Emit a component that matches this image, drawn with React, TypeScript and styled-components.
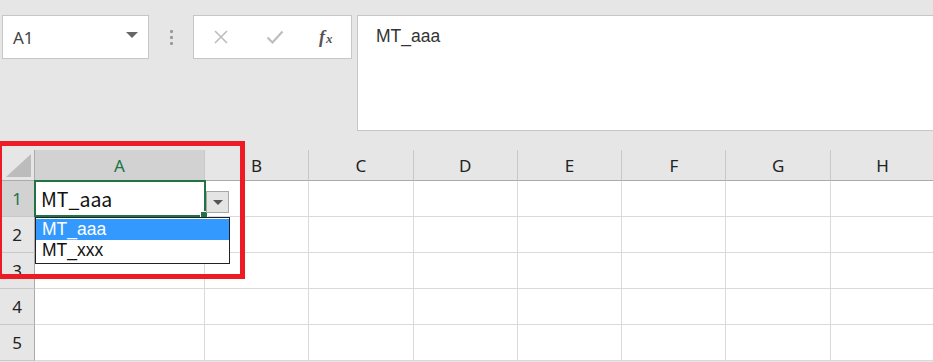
import styled, { createGlobalStyle } from "styled-components";

const GlobalStyle = createGlobalStyle`
  html, body {
    margin: 0;
    padding: 0;
    background: #e6e6e6;
  }
  body {
    font-family: "Noto Sans", "Liberation Sans", sans-serif;
  }
`;

const COLS = ["A", "B", "C", "D", "E", "F", "G", "H"];
const ROWS = [1, 2, 3, 4, 5];

const Page = styled.div`
  position: relative;
  width: 933px;
  height: 362px;
  overflow: hidden;
  background: #e6e6e6;
`;

const FormulaBar = styled.div`
  display: flex;
  align-items: flex-start;
  padding: 15px 0 0 2px;
  height: 128px;
  box-sizing: border-box;
`;

const NameBox = styled.div`
  width: 147px;
  height: 44px;
  box-sizing: border-box;
  background: #fff;
  border: 1px solid #c6c6c6;
  display: flex;
  align-items: center;
  justify-content: space-between;
  padding: 0 10px 0 10px;
  font-size: 17px;
  color: #444;
`;

const Caret = styled.span`
  width: 0;
  height: 0;
  border-left: 6px solid transparent;
  border-right: 6px solid transparent;
  border-top: 6px solid #666;
  margin-top: -4px;
`;

const Grip = styled.div`
  width: 44px;
  height: 44px;
  display: flex;
  flex-direction: column;
  align-items: center;
  justify-content: center;
  gap: 3px;
`;

const GripDot = styled.span`
  width: 3px;
  height: 3px;
  background: #9a9a9a;
  border-radius: 1px;
`;

const FxBox = styled.div`
  width: 159px;
  height: 44px;
  box-sizing: border-box;
  background: #fff;
  border: 1px solid #c6c6c6;
  display: flex;
  align-items: center;
  padding-left: 19px;
  gap: 37px;
`;

const FxLabel = styled.span`
  font-family: "Liberation Serif", serif;
  font-style: italic;
  font-weight: bold;
  font-size: 18px;
  color: #555;
  margin-left: -2px;

  small {
    font-size: 13px;
    margin-left: 1px;
  }
`;

const FormulaInput = styled.div`
  flex: 1;
  margin-left: 5px;
  margin-right: -4px;
  height: 116px;
  box-sizing: border-box;
  background: #fff;
  border: 1px solid #c6c6c6;
  padding: 10px 0 0 18px;
  font-family: "Liberation Sans", Arial, sans-serif;
  font-size: 17.5px;
  color: #333;
`;

const SheetArea = styled.div`
  position: relative;
  margin-top: 22px;
`;

const Grid = styled.div`
  display: grid;
  grid-template-columns: 35px 170px repeat(7, 104.3px);
  grid-template-rows: 31px repeat(5, 36px);
`;

const Corner = styled.div`
  background: #e6e6e6;
  border-right: 1px solid #ababab;
  border-bottom: 1px solid #ababab;
  box-sizing: border-box;
  display: flex;
  align-items: flex-end;
  justify-content: flex-end;
  padding: 0 3px 3px 0;
`;

const ColHeader = styled.div<{ $active?: boolean }>`
  background: ${(p) => (p.$active ? "#d2d2d2" : "#e6e6e6")};
  color: ${(p) => (p.$active ? "#217346" : "#222")};
  border-right: 1px solid #c8c8c8;
  border-bottom: 1px solid #ababab;
  box-sizing: border-box;
  display: flex;
  align-items: center;
  justify-content: center;
  font-size: 17px;
`;

const RowHeader = styled.div<{ $active?: boolean }>`
  background: ${(p) => (p.$active ? "#d2d2d2" : "#e6e6e6")};
  color: ${(p) => (p.$active ? "#217346" : "#222")};
  border-right: 1px solid #ababab;
  border-bottom: 1px solid #c8c8c8;
  box-sizing: border-box;
  display: flex;
  align-items: center;
  justify-content: center;
  font-size: 17px;
`;

const Cell = styled.div`
  background: #fff;
  border-right: 1px solid #dadada;
  border-bottom: 1px solid #dadada;
  box-sizing: border-box;
`;

const ActiveCell = styled.div`
  position: absolute;
  left: 34px;
  top: 30px;
  width: 172px;
  height: 37px;
  box-sizing: border-box;
  border: 2px solid #217346;
  background: #fff;
  padding: 0 0 0 5px;
  display: flex;
  align-items: center;
  font-family: "Noto Sans CJK JP", "Noto Sans", sans-serif;
  font-size: 19.5px;
  color: #111;
`;

const FillHandle = styled.span`
  position: absolute;
  right: -4px;
  bottom: -4px;
  width: 6px;
  height: 6px;
  background: #217346;
  border: 1px solid #fff;
`;

const DropButton = styled.div`
  position: absolute;
  left: 206px;
  top: 41px;
  width: 23px;
  height: 22px;
  box-sizing: border-box;
  background: #e4e4e4;
  border: 1px solid #a8a8a8;
  display: flex;
  align-items: center;
  justify-content: center;
`;

const SmallCaret = styled.span`
  width: 0;
  height: 0;
  border-left: 5px solid transparent;
  border-right: 5px solid transparent;
  border-top: 5px solid #555;
`;

const ListBox = styled.div`
  position: absolute;
  left: 35px;
  top: 67px;
  width: 195px;
  box-sizing: border-box;
  border: 1px solid #222;
  background: #fff;
  padding: 1px 0 2px 0;
  font-family: "Liberation Sans", Arial, sans-serif;
  font-size: 17.5px;
`;

const ListItem = styled.div<{ $selected?: boolean }>`
  height: 21px;
  line-height: 21px;
  padding-left: 6px;
  background: ${(p) => (p.$selected ? "#3399ff" : "transparent")};
  color: ${(p) => (p.$selected ? "#fff" : "#111")};
`;

const Highlight = styled.div`
  position: absolute;
  left: -3px;
  top: -9px;
  width: 248px;
  height: 138px;
  box-sizing: border-box;
  border: 5px solid #ed1c24;
  pointer-events: none;
`;

const XIcon = () => (
  <svg width="16" height="16" viewBox="0 0 16 16">
    <path d="M2 2 L14 14 M14 2 L2 14" stroke="#bdbdbd" strokeWidth="1.6" fill="none" />
  </svg>
);

const CheckIcon = () => (
  <svg width="18" height="16" viewBox="0 0 18 16">
    <path d="M1.5 8.5 L6.5 13.5 L16.5 2.5" stroke="#bdbdbd" strokeWidth="2.2" fill="none" />
  </svg>
);

const CornerTriangle = () => (
  <svg width="25" height="23" viewBox="0 0 25 23">
    <polygon points="25,0 25,23 0,23" fill="#bcbcbc" />
  </svg>
);

export default function App() {
  return (
    <Page>
      <GlobalStyle />
      <FormulaBar>
        <NameBox>
          <span>A1</span>
          <Caret />
        </NameBox>
        <Grip>
          <GripDot />
          <GripDot />
          <GripDot />
        </Grip>
        <FxBox>
          <XIcon />
          <CheckIcon />
          <FxLabel>
            f<small>x</small>
          </FxLabel>
        </FxBox>
        <FormulaInput>MT_aaa</FormulaInput>
      </FormulaBar>
      <SheetArea>
        <Grid>
          <Corner>
            <CornerTriangle />
          </Corner>
          {COLS.map((c) => (
            <ColHeader key={c} $active={c === "A"}>
              {c}
            </ColHeader>
          ))}
          {ROWS.map((r) => [
            <RowHeader key={`h${r}`} $active={r === 1}>
              {r}
            </RowHeader>,
            ...COLS.map((c) => <Cell key={`${c}${r}`} />),
          ])}
        </Grid>
        <ActiveCell>
          MT_aaa
          <FillHandle />
        </ActiveCell>
        <DropButton>
          <SmallCaret />
        </DropButton>
        <ListBox>
          <ListItem $selected>MT_aaa</ListItem>
          <ListItem>MT_xxx</ListItem>
        </ListBox>
        <Highlight />
      </SheetArea>
    </Page>
  );
}
